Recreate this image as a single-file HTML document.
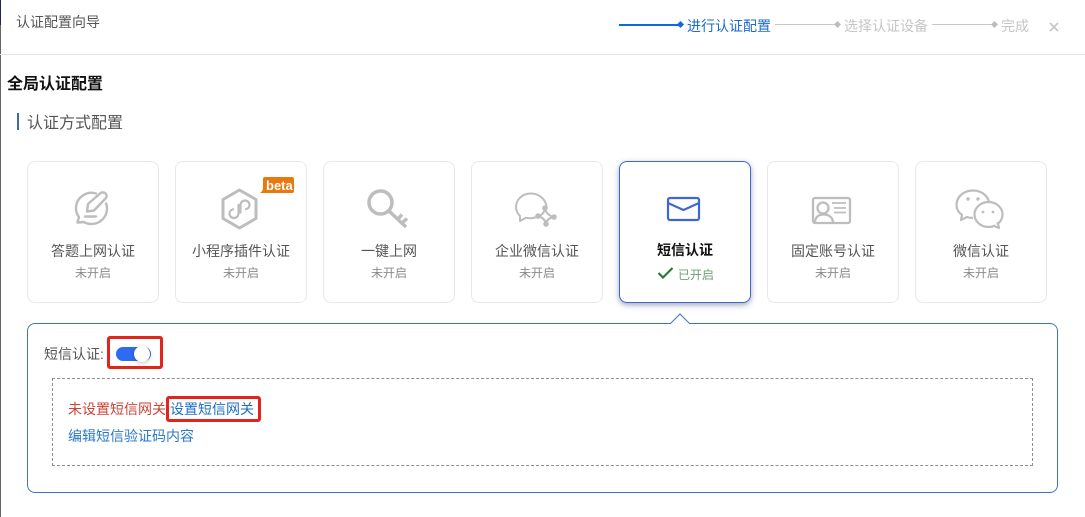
<!DOCTYPE html>
<html lang="zh">
<head>
<meta charset="utf-8">
<style>
html,body{margin:0;padding:0;background:#fff;}
body{width:1085px;height:517px;position:relative;overflow:hidden;font-family:"Liberation Sans","Noto Sans CJK SC",sans-serif;color:#555;}
.a{position:absolute;white-space:nowrap;}
.card{position:absolute;top:161px;width:130px;height:140px;border:1px solid #e8e8e8;border-radius:8px;background:#fff;}
.card.on{border:1px solid #3f67d0;box-shadow:0 2px 6px rgba(40,60,110,.45);}
.t{position:absolute;top:80px;left:0;width:100%;text-align:center;font-size:14px;line-height:18px;color:#555;white-space:nowrap;}
.s{position:absolute;top:103px;left:0;width:100%;text-align:center;font-size:12px;line-height:16px;color:#8a8a8a;white-space:nowrap;}
.card svg.i{position:absolute;left:0;top:0;}
.d{position:absolute;width:5px;height:5px;transform:rotate(45deg);}
.l{position:absolute;height:1px;background:#c8c8c8;}
</style>
</head>
<body>
<div class="a" style="left:0;top:0;width:1px;height:517px;background:#666"></div>
<div class="a" style="left:0;top:0;width:1px;height:25px;background:#1d2a4d"></div>

<div class="a" style="left:16px;top:13px;font-size:14px;line-height:18px;color:#555">认证配置向导</div>
<div class="a" style="left:0;top:54px;width:1085px;height:1px;background:#e3e3e3"></div>

<div class="l" style="left:619px;top:24px;width:61px;height:2px;background:#1169d8"></div>
<div class="d" style="left:678px;top:22px;background:#1169d8"></div>
<div class="a" style="left:687px;top:17px;font-size:14px;line-height:18px;color:#1a6ad0">进行认证配置</div>
<div class="l" style="left:775px;top:24px;width:60px"></div>
<div class="d" style="left:835px;top:22px;background:#bdbdbd"></div>
<div class="a" style="left:844px;top:17px;font-size:14px;line-height:18px;color:#c6c6c6">选择认证设备</div>
<div class="l" style="left:932px;top:24px;width:60px"></div>
<div class="d" style="left:992px;top:22px;background:#bdbdbd"></div>
<div class="a" style="left:1001px;top:17px;font-size:14px;line-height:18px;color:#c6c6c6">完成</div>
<svg class="a" style="left:1049px;top:22px" width="10" height="10" viewBox="0 0 10 10"><path d="M1 1L9 9M9 1L1 9" stroke="#c4c4c4" stroke-width="1.6" fill="none"/></svg>

<div class="a" style="left:7px;top:74px;font-size:16px;line-height:21px;font-weight:bold;color:#111">全局认证配置</div>
<div class="a" style="left:17px;top:113px;width:2px;height:17px;background:#3f67b5"></div>
<div class="a" style="left:27px;top:114px;font-size:16px;line-height:20px;color:#555">认证方式配置</div>

<!-- card 1 -->
<div class="card" style="left:27px">
<svg class="i" width="130" height="90" viewBox="0 0 130 90" fill="none" stroke="#bdbdbd" stroke-width="2.4" stroke-linecap="round" stroke-linejoin="round">
<path d="M68 31.500A15.500 15.500 0 0 0 48 46.500C48 50 49 52.500 51 55L49.500 60.500L56 60C58 61.500 61 62 63.500 62A15.500 15.500 0 0 0 79 46.500C79 44.500 78.700 43 78 41.500"/>
<path d="M60 42L72 31.500C73.500 30 76 30 77.500 31.500C79 33 79 35 77.500 36.500L66 48.500L59 49.500Z"/>
<path d="M57 54.500H68"/>
</svg>
<div class="t">答题上网认证</div><div class="s">未开启</div>
</div>

<!-- card 2 -->
<div class="card" style="left:175px">
<svg class="i" width="130" height="90" viewBox="0 0 130 90" fill="none" stroke="#bdbdbd" stroke-linecap="round" stroke-linejoin="round">
<path d="M63.500 28L80 37.500V56.500L63.500 66L47 56.500V37.500Z" stroke-width="3"/>
<path d="M62.500 43V51.500C62.500 54 60.500 56 58 56C55.500 56 53.500 54 53.500 51.500C53.500 49.500 55 47.800 57 47.300M64.500 50.500V43C64.500 40.500 66.500 38.500 69 38.500C71.500 38.500 73.500 40.500 73.500 43C73.500 45 72 46.700 70 47.200" stroke-width="2.200"/>
</svg>
<svg class="a" style="left:83px;top:15px" width="37" height="18" viewBox="0 0 37 18"><path d="M6 0H33Q35 0 35 2V14Q35 16 33 16H1Q4 14 4 11V2Q4 0 6 0Z" fill="#e8790f"/></svg>
<div class="a" style="left:90px;top:15px;font-size:13px;line-height:17px;font-weight:bold;color:#fff">beta</div>
<div class="t">小程序插件认证</div><div class="s">未开启</div>
</div>

<!-- card 3 -->
<div class="card" style="left:323px">
<svg class="i" width="130" height="90" viewBox="0 0 130 90" fill="none" stroke="#bdbdbd" stroke-width="3.500">
<circle cx="56.500" cy="40.500" r="11.500"/>
<path d="M65 49L82 65M74 57L78 52.500M78 61L83 56.500"/>
</svg>
<div class="t">一键上网</div><div class="s">未开启</div>
</div>

<!-- card 4 -->
<div class="card" style="left:471px">
<svg class="i" width="130" height="90" viewBox="0 0 130 90" fill="none" stroke="#bdbdbd" stroke-width="2" stroke-linecap="round" stroke-linejoin="round">
<path d="M74.500 44C73 36.500 66.500 31.500 59 31.500C50.500 31.500 44 37.500 44 45C44 48.500 45.500 51.500 48 54L48 59L54 55.800C57 56.500 60 56.500 63 55.500"/>
<path d="M73 46Q74 53 82 55Q75 56 74 62Q73 56 66 54Q72 53 73 46Z"/>
<circle cx="73" cy="46" r="1.800" fill="#bdbdbd"/><circle cx="82" cy="55" r="1.800" fill="#bdbdbd"/><circle cx="66" cy="54" r="1.800" fill="#bdbdbd"/><circle cx="74" cy="62" r="1.800" fill="#bdbdbd"/>
</svg>
<div class="t">企业微信认证</div><div class="s">未开启</div>
</div>

<!-- card 5 -->
<div class="card on" style="left:619px">
<svg class="i" width="130" height="90" viewBox="0 0 130 90" fill="none" stroke="#3f67d0" stroke-width="2.200" stroke-linejoin="round">
<rect x="48" y="36" width="31" height="22" rx="2"/>
<path d="M48 41L63.500 48L79 41"/>
</svg>
<div class="t" style="top:79px;color:#111;font-weight:bold;">短信认证</div>
<svg class="a" style="left:37px;top:104px" width="17" height="14" viewBox="0 0 17 14"><path d="M1.500 7L6 11.500L15.500 2" fill="none" stroke="#2a7a3a" stroke-width="2.200"/></svg>
<div class="a" style="left:58px;top:105px;font-size:12px;line-height:16px;color:#6fa077">已开启</div>
</div>

<!-- card 6 -->
<div class="card" style="left:767px">
<svg class="i" width="130" height="90" viewBox="0 0 130 90" fill="none" stroke="#bdbdbd" stroke-width="2.300">
<rect x="45" y="36" width="37" height="25" rx="2"/>
<circle cx="55" cy="46" r="5.500"/>
<path d="M47 61C47 55 50.500 52.500 55.500 52.500C60.500 52.500 65 55 65 61"/>
<path d="M64 41H78M66 46H78M66 50.500H78" stroke-width="1.800"/>
</svg>
<div class="t">固定账号认证</div><div class="s">未开启</div>
</div>

<!-- card 7 -->
<div class="card" style="left:915px">
<svg class="i" width="130" height="90" viewBox="0 0 130 90" fill="none" stroke="#bdbdbd" stroke-width="2.200" stroke-linejoin="round">
<path d="M73 39.500C71 33 65 28.500 57 28.500C47.500 28.500 40.500 35 40.500 43C40.500 47 42.500 50.500 46 53L45 58L51 55C53 55.700 55 56 57 56"/>
<ellipse cx="72.500" cy="52.500" rx="14" ry="12.500" fill="#fff"/>
<path d="M78 64L83 66L81.500 60" fill="#fff"/>
<circle cx="52" cy="37" r="1.700" fill="#bdbdbd" stroke="none"/><circle cx="62" cy="37" r="1.700" fill="#bdbdbd" stroke="none"/>
<circle cx="67" cy="50" r="1.400" fill="#bdbdbd" stroke="none"/><circle cx="77" cy="50" r="1.400" fill="#bdbdbd" stroke="none"/>
</svg>
<div class="t">微信认证</div><div class="s">未开启</div>
</div>

<!-- panel -->
<div class="a" style="left:27px;top:323px;width:1029px;height:168px;border:1px solid #3f74c4;border-radius:8px;background:#fff"></div>
<svg class="a" style="left:669px;top:312px" width="22" height="13" viewBox="0 0 22 13"><path d="M1 12L11 2L21 12" fill="#fff" stroke="#3f74c4" stroke-width="1"/><path d="M2 12.500H20V13H2Z" fill="#fff"/></svg>

<div class="a" style="left:44px;top:345px;font-size:14px;line-height:18px;color:#555">短信认证:</div>
<div class="a" style="left:107px;top:336px;width:50px;height:27px;border:3px solid #e3241b;border-radius:3px"></div>
<div class="a" style="left:116px;top:347px;width:35px;height:14px;border-radius:7px;background:#2f6bf0"></div>
<div class="a" style="left:134px;top:346px;width:16px;height:16px;border-radius:50%;background:#fff;box-shadow:0 1px 4px rgba(0,0,0,.25)"></div>

<div class="a" style="left:52px;top:378px;width:979px;height:86px;border:1px dashed #8f8f8f"></div>
<div class="a" style="left:68px;top:400px;font-size:14px;line-height:18px;color:#cc4338">未设置短信网关</div>
<div class="a" style="left:170px;top:400px;font-size:14px;line-height:18px;color:#1d6fc4">设置短信网关</div>
<div class="a" style="left:166px;top:396px;width:89px;height:20px;border:3px solid #e3241b;border-radius:3px"></div>
<div class="a" style="left:68px;top:427px;font-size:14px;line-height:18px;color:#2c78c8">编辑短信验证码内容</div>
</body>
</html>
